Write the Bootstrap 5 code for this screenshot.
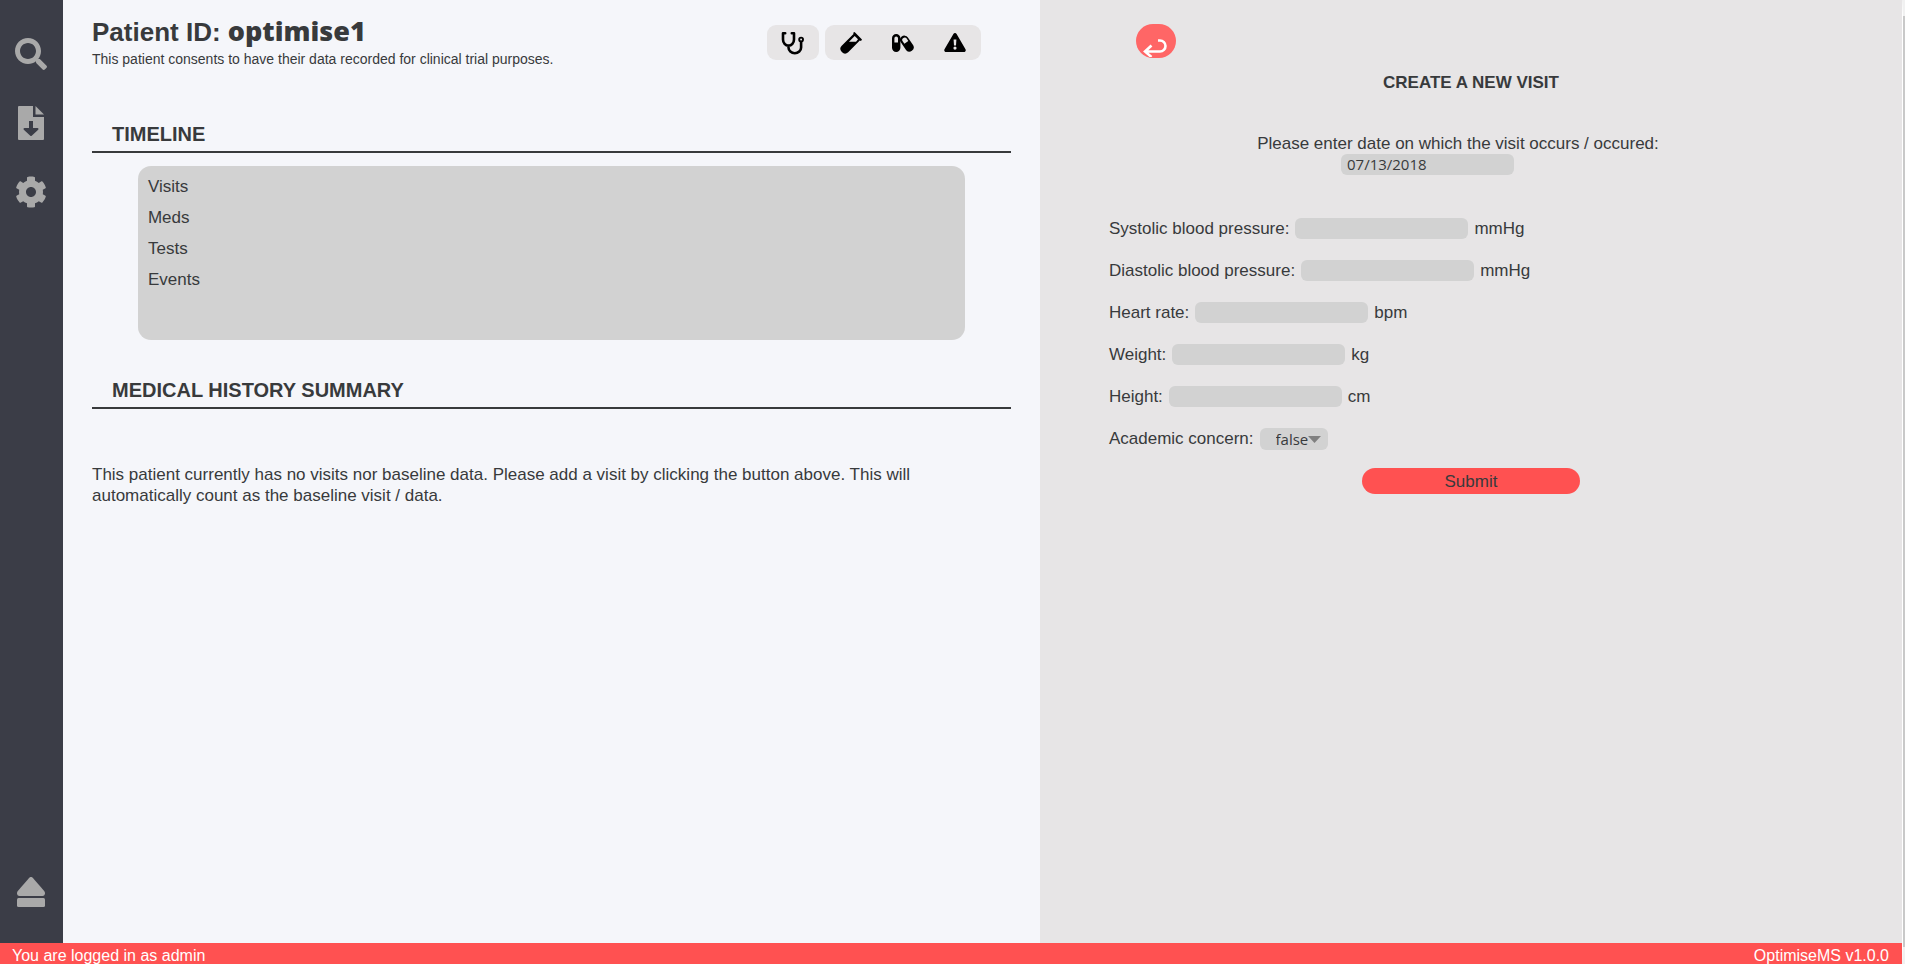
<!DOCTYPE html>
<html lang="en">
<head>
<meta charset="utf-8">
<meta name="viewport" content="width=device-width, initial-scale=1">
<title>OptimiseMS</title>
<link href="https://cdn.jsdelivr.net/npm/bootstrap@5.3.0/dist/css/bootstrap.min.css" rel="stylesheet">
<style>
  body { font: 17px/21px "Liberation Sans", Arial, sans-serif; color: #383a3c; background: #f5f6fa; }
  .workspace { display: grid; grid-template-columns: 63px minmax(0, 17fr) minmax(0, 15fr); }
  .side-menu { background: #3b3d47; padding: 19px 1px 17px 0; }
  .side-menu a { height: 69px; color: #a9a9a9; }
  .side-menu a, .tool-group a { display: flex; align-items: center; justify-content: center; }
  svg { display: block; fill: currentColor; }
  .line-icon { fill: none; stroke: currentColor; stroke-width: 2.6; }
  .patient-pane { padding: 17px 29px; }
  .visit-pane { background: #e7e5e6; padding: 24px 69px; }
  .patient-title { font-size: 26px; line-height: 30px; font-weight: 700; }
  .patient-title span { font-family: "Open Sans", "Liberation Sans", sans-serif; font-size: 27px; font-weight: 800; line-height: 20px; }
  .consent { font-size: 14px; line-height: 16px; margin-top: 4px; }
  .tools { gap: 6px; margin: 8px 30px 0 0; }
  .tool-group { background: #e7e5e6; border-radius: 9px; }
  .tool-group a { width: 52px; height: 35px; color: #000; }
  .section-title { font-size: 20px; line-height: 23px; font-weight: 700; padding: 0 20px 5px; border-bottom: 2px solid #383a3c; }
  .first-title { margin-top: 56px; }
  .next-title { margin-top: 39px; }
  .timeline { width: 90%; min-height: 174px; margin-top: 13px; padding: 5px 10px; background: #d2d2d2; border-radius: 13px; line-height: 31px; }
  .summary { margin-top: 55px; }
  .back-btn { width: 40px; height: 34px; background: #ff6666; color: #fff; margin-left: 27px; padding: 12px 0 0 2px; }
  .visit-title { font-size: 17px; line-height: 21px; font-weight: 700; margin-top: 14px; }
  .date-block { margin-top: 40px; padding-right: 26px; }
  .date-block input { margin-right: 61px; }
  .field { width: 173px; height: 21px; padding: 0 6px; }
  .field, .choice { border: 0; border-radius: 6px; background-color: #d2d2d2; color: inherit; font: 15px/21px "Open Sans", sans-serif; }
  .choice { width: 68px; height: 22px; padding: 0 0 0 16px; appearance: none; background-repeat: no-repeat; background-position: 48px 8px;
    background-image: url("data:image/svg+xml,%3Csvg xmlns='http://www.w3.org/2000/svg' width='13' height='7'%3E%3Cpath d='M0 0h13L6.5 7z' fill='%23808080'/%3E%3C/svg%3E"); }
  .measures { display: grid; gap: 21px; margin-top: 43px; }
  .measures > div { gap: 6px; height: 21px; }
  .submit-btn { width: 30%; height: 26px; margin-top: 19px; background: #ff5151; color: inherit; }
  .status-bar { height: 21px; line-height: 25px; font-size: 16px; padding: 0 13px 0 12px; background: #ff5151; color: #fff; }
  .scroll-edge { width: 3px; border-left: 1px solid #fff; background: #c9c9c9; border-top: 16px solid #f1f1f1; border-bottom: 17px solid #f1f1f1; }
</style>
</head>
<body>
<div class="d-flex vh-100 overflow-hidden">
  <div class="d-flex flex-column flex-grow-1">
    <div class="workspace flex-grow-1">
      <nav class="side-menu d-flex flex-column" aria-label="Main">
        <ul class="list-unstyled d-flex flex-column flex-grow-1 mb-0">
          <li><a href="#search" aria-label="Search"><svg width="32" height="32" viewBox="0 0 512 512"><path d="M505 442.700L405.300 343c-4.500-4.500-10.600-7-17-7H372c27.600-35.300 44-79.700 44-128C416 93.100 322.900 0 208 0S0 93.100 0 208s93.100 208 208 208c48.300 0 92.700-16.400 128-44v16.300c0 6.400 2.500 12.500 7 17l99.700 99.700c9.400 9.400 24.600 9.400 33.900 0l28.300-28.300c9.400-9.400 9.400-24.600.1-34zM208 336c-70.700 0-128-57.200-128-128 0-70.700 57.200-128 128-128 70.700 0 128 57.200 128 128 0 70.700-57.200 128-128 128z"/></svg></a></li>
          <li><a href="#export" aria-label="Export data"><svg width="26" height="34" viewBox="0 0 26 34"><path fill-rule="evenodd" d="M1 0h14v11h11v22a1 1 0 0 1-1 1H1a1 1 0 0 1-1-1V1a1 1 0 0 1 1-1zm10 15v7H6.500a1 1 0 0 0-.7 1.700l6.500 6a1 1 0 0 0 1.400 0l6.500-6a1 1 0 0 0-.7-1.700H15v-7z"/><path d="M17.500 0L26 8.500H17.500z"/></svg></a></li>
          <li><a href="#settings" aria-label="Settings"><svg width="32" height="32" viewBox="0 0 512 512"><path d="M487.400 315.700l-42.600-24.600c4.300-23.200 4.300-47 0-70.200l42.600-24.600c4.900-2.800 7.100-8.600 5.500-14-11.100-35.600-30-67.800-54.700-94.600-3.800-4.100-10-5.100-14.800-2.300L380.800 110c-17.900-15.400-38.500-27.300-60.800-35.100V25.800c0-5.600-3.900-10.500-9.400-11.700-36.700-8.200-74.300-7.800-109.200 0-5.500 1.200-9.400 6.100-9.400 11.700V75c-22.200 7.900-42.800 19.800-60.800 35.100L88.700 85.500c-4.900-2.800-11-1.900-14.800 2.300-24.700 26.700-43.600 58.900-54.700 94.600-1.700 5.400.6 11.200 5.500 14L67.300 221c-4.300 23.200-4.300 47 0 70.200l-42.600 24.600c-4.900 2.800-7.100 8.600-5.500 14 11.100 35.600 30 67.800 54.700 94.600 3.800 4.100 10 5.100 14.800 2.300l42.600-24.600c17.900 15.400 38.500 27.300 60.800 35.100v49.200c0 5.600 3.900 10.500 9.400 11.700 36.700 8.200 74.300 7.800 109.200 0 5.500-1.200 9.400-6.100 9.400-11.700v-49.200c22.200-7.900 42.800-19.800 60.800-35.100l42.600 24.600c4.900 2.800 11 1.900 14.800-2.300 24.700-26.700 43.600-58.900 54.700-94.600 1.500-5.500-.7-11.300-5.600-14.100zM256 336c-44.100 0-80-35.900-80-80s35.900-80 80-80 80 35.900 80 80-35.900 80-80 80z"/></svg></a></li>
          <li class="mt-auto"><a href="#logout" aria-label="Log out"><svg width="28" height="30" viewBox="0 0 28 30"><path d="M12.300.8a2.400 2.400 0 0 1 3.400 0L27.200 14c1.500 1.800.8 5-1.700 5h-23C0 19-.7 15.800.8 14z"/><rect y="21" width="28" height="9" rx="1.500"/></svg></a></li>
        </ul>
      </nav>

      <main class="patient-pane">
        <div class="d-flex justify-content-between align-items-start">
          <div>
            <h1 class="patient-title mb-0">Patient ID: <span>optimise1</span></h1>
            <p class="consent mb-0">This patient consents to have their data recorded for clinical trial purposes.</p>
          </div>
          <div class="tools d-flex">
            <div class="tool-group"><a href="#visit" aria-label="Add visit"><svg class="line-icon" width="24" height="24" viewBox="0 0 24 24" stroke-linecap="round" stroke-linejoin="round"><path d="M4.200 2.200H2V8.500a5.300 6 0 0 0 11 0V2.200H10.800M7.500 14.500v2a6.300 5.700 0 0 0 12.600 0V11.500"/><circle cx="20.100" cy="8.500" r="1.900" stroke-width="1.900"/></svg></a></div>
            <div class="tool-group d-flex">
              <a href="#tests" aria-label="Add test"><svg width="22" height="22" viewBox="0 0 22 22"><path fill-rule="evenodd" d="M13.200.7l1.400-.7L22 7.400l-1 1.500-1.200-.3L8.200 20.200a4.600 4.600 0 0 1-6.500-6.500L13.500 2zM14.700 4L9 9.700h7L18 7.300z"/></svg></a>
              <a href="#meds" aria-label="Add medication"><svg width="22" height="18" viewBox="0 0 22 18"><path fill-rule="evenodd" d="M0 4.200a4.200 4.200 0 0 1 8.400 0v9.600a4.200 4.200 0 0 1-8.400 0zM2.400 4.200V8.500H6V4.200a1.800 1.800 0 0 0-3.600 0z"/><path fill-rule="evenodd" d="M9.700 2.600a4.300 4.300 0 0 1 6.200.8l5.300 7.900a4.300 4.300 0 0 1-7 4.900L8.800 8.300a4.200 4.200 0 0 1 .9-5.700zM11 4.300c-1.200.9-.9 2.100-.5 2.700l1.900 2.700 3.900-2.800-1.800-2.600c-.7-1-2.400-.9-3.500 0z"/></svg></a>
              <a href="#events" aria-label="Add event"><svg width="22" height="20" viewBox="0 0 22 20"><path fill-rule="evenodd" d="M9.400 1a1.800 1.800 0 0 1 3.200 0l8.900 15.300c.7 1.200-.2 2.700-1.600 2.700H2.100C.7 19-.2 17.500.5 16.300zM9.600 6.400l.4 6h2l.4-6zM11 13.500a1.600 1.600 0 1 0 0 3.200 1.600 1.600 0 0 0 0-3.200z"/></svg></a>
            </div>
          </div>
        </div>

        <h2 class="section-title first-title mb-0">TIMELINE</h2>
        <ul class="timeline list-unstyled mx-auto mb-0">
          <li>Visits</li>
          <li>Meds</li>
          <li>Tests</li>
          <li>Events</li>
        </ul>

        <h2 class="section-title next-title mb-0">MEDICAL HISTORY SUMMARY</h2>
        <p class="summary mb-0">This patient currently has no visits nor baseline data. Please add a visit by clicking the button above. This will automatically count as the baseline visit / data.</p>
      </main>

      <aside class="visit-pane">
        <button type="button" class="back-btn border-0 rounded-pill d-block" aria-label="Back"><svg class="line-icon" width="32" height="20" viewBox="0 0 32 20"><path d="M20 3.500h2a5.500 5.500 0 0 1 0 11H7M13.500 8.500l-6.500 6 6.500 5.500"/></svg></button>
        <h2 class="visit-title text-center mb-0">CREATE A NEW VISIT</h2>
        <form>
          <div class="date-block d-flex flex-column align-items-center">
            <label for="visitDate">Please enter date on which the visit occurs / occured:</label>
            <input id="visitDate" class="field" type="text" value="07/13/2018">
          </div>
          <div class="measures">
            <div class="d-flex"><label for="systolic">Systolic blood pressure:</label><input id="systolic" class="field" type="text"><span>mmHg</span></div>
            <div class="d-flex"><label for="diastolic">Diastolic blood pressure:</label><input id="diastolic" class="field" type="text"><span>mmHg</span></div>
            <div class="d-flex"><label for="heart">Heart rate:</label><input id="heart" class="field" type="text"><span>bpm</span></div>
            <div class="d-flex"><label for="weight">Weight:</label><input id="weight" class="field" type="text"><span>kg</span></div>
            <div class="d-flex"><label for="height">Height:</label><input id="height" class="field" type="text"><span>cm</span></div>
            <div class="d-flex"><label for="concern">Academic concern:</label><select id="concern" class="choice"><option>false</option><option>true</option></select></div>
          </div>
          <button type="submit" class="submit-btn border-0 rounded-pill d-block mx-auto p-0">Submit</button>
        </form>
      </aside>
    </div>
    <footer class="status-bar d-flex justify-content-between flex-shrink-0 overflow-hidden">
      <span>You are logged in as admin</span>
      <span>OptimiseMS v1.0.0</span>
    </footer>
  </div>
  <div class="scroll-edge flex-shrink-0"></div>
</div>
<script src="https://cdn.jsdelivr.net/npm/bootstrap@5.3.0/dist/js/bootstrap.bundle.min.js"></script>
</body>
</html>
